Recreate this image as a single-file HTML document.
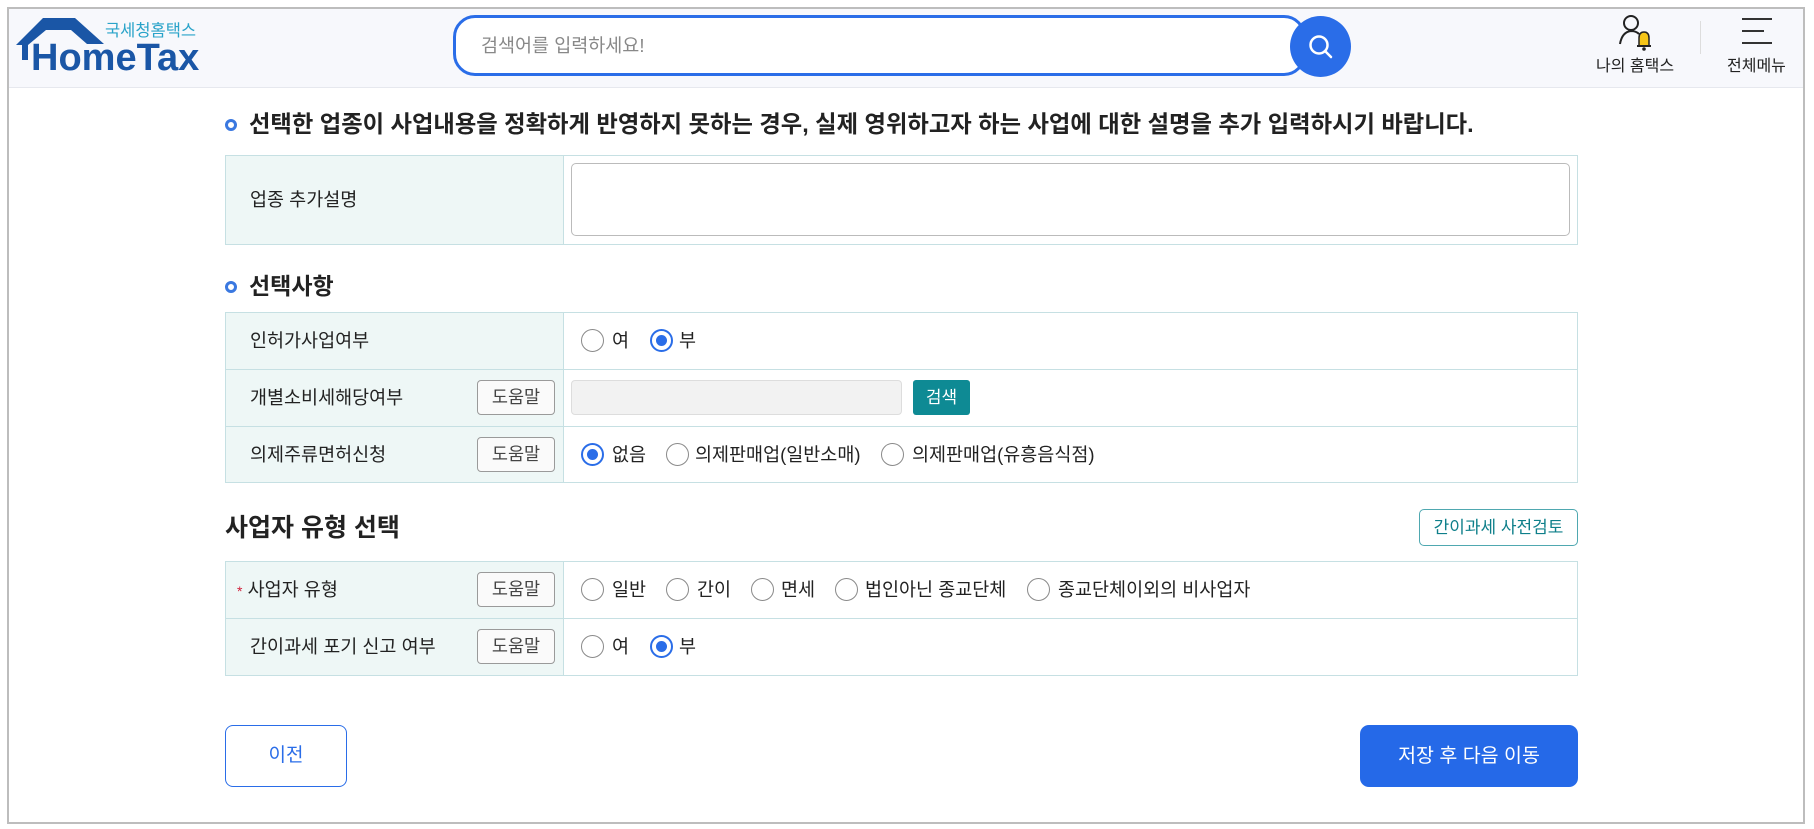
<!DOCTYPE html>
<html><head><meta charset="utf-8"><style>
*{margin:0;padding:0;box-sizing:border-box}
body{width:1814px;height:829px;background:#fff;font-family:"Liberation Sans","Noto Sans CJK KR",sans-serif;position:relative;overflow:hidden;color:#222}
.a{position:absolute}
.frame{left:7px;top:7px;width:1798px;height:817px;border:2px solid #bdbdbd}
.hdr{left:9px;top:9px;width:1794px;height:79px;background:#f7f8fc;border-bottom:1px solid #e6e8ee}
.t{font-size:18.5px;white-space:nowrap;line-height:22px}
.tbl{border:1px solid #c6e0e3;background:#fff}
.lab{background:#eef7f6;border-right:1px solid #c6e0e3}
.hl{height:1px;background:#c6e0e3}
.help{width:78px;height:35px;border:1px solid #9a9a9a;border-radius:4px;background:#fafafa;font-size:17.5px;color:#444;text-align:center;line-height:33px}
.r{width:23px;height:23px;border:1px solid #8a8a8a;border-radius:50%;background:#fff}
.r.on{border:2px solid #2a6de8}
.r.on::after{content:"";position:absolute;left:4px;top:4px;width:11px;height:11px;border-radius:50%;background:#2a6de8}
.bul{width:12px;height:12px;border:3px solid #3a78e0;border-radius:50%}
</style></head><body>
<div class="a frame"></div>
<div class="a hdr"></div>
<svg class="a" style="left:14px;top:16px" width="92" height="45" viewBox="0 0 92 45"><path d="M2 29 L29 2 L61 2 L90 28 L73 28 L57 14 L32 14 L14 29 Z M8 29 L14 29 L14 44 L8 44 Z" fill="#1a56a6"/></svg>
<div class="a" style="left:31px;top:38px;font-size:38px;font-weight:bold;color:#1a56a6;line-height:40px">HomeTax</div>
<div class="a" style="left:105px;top:22px;font-size:16.5px;color:#29a3c9;line-height:18px">국세청홈택스</div>
<div class="a" style="left:453px;top:15px;width:853px;height:61px;border:3px solid #2a6de8;border-radius:22px;background:#fff"></div>
<div class="a t" style="left:481px;top:35px;color:#888;font-size:18.5px">검색어를 입력하세요!</div>
<div class="a" style="left:1290px;top:16px;width:61px;height:61px;border-radius:50%;background:#2a6de8"></div>
<svg class="a" style="left:1306px;top:32px" width="30" height="30" viewBox="0 0 30 30"><circle cx="13" cy="13" r="8.5" fill="none" stroke="#fff" stroke-width="2.5"/><path d="M19 19 L25 25" stroke="#fff" stroke-width="2.5" stroke-linecap="round"/></svg>
<svg class="a" style="left:1617px;top:14px" width="40" height="38" viewBox="0 0 40 38"><circle cx="14" cy="9" r="7" fill="none" stroke="#222" stroke-width="2"/><path d="M3 30 Q5 18 14 17 Q19 17 22 20" fill="none" stroke="#222" stroke-width="2"/><path d="M22 32 L22 24 Q22 18 27 18 Q32 18 32 24 L32 32 Z" fill="#f5c518" stroke="#222" stroke-width="1.5"/><path d="M20 32 L34 32" stroke="#222" stroke-width="2"/><circle cx="27" cy="35" r="1.8" fill="#222"/></svg>
<div class="a t" style="left:1596px;top:56px;font-size:16px">나의 홈택스</div>
<div class="a" style="left:1700px;top:21px;width:1px;height:33px;background:#ddd"></div>
<div class="a" style="left:1742px;top:18px;width:30px;height:2px;background:#333"></div>
<div class="a" style="left:1742px;top:30px;width:22px;height:2px;background:#333"></div>
<div class="a" style="left:1742px;top:42px;width:30px;height:2px;background:#333"></div>
<div class="a t" style="left:1727px;top:56px;font-size:16px">전체메뉴</div>

<div class="a bul" style="left:225px;top:119px"></div>
<div class="a" style="left:249px;top:110px;font-size:23.3px;font-weight:bold;white-space:nowrap;line-height:28px">선택한 업종이 사업내용을 정확하게 반영하지 못하는 경우, 실제 영위하고자 하는 사업에 대한 설명을 추가 입력하시기 바랍니다.</div>
<div class="a tbl" style="left:225px;top:155px;width:1353px;height:90px"></div>
<div class="a lab" style="left:226px;top:156px;width:338px;height:88px"></div>
<div class="a t" style="left:250px;top:189px">업종 추가설명</div>
<div class="a" style="left:571px;top:163px;width:999px;height:73px;border:1px solid #bbb;border-radius:5px"></div>

<div class="a bul" style="left:225px;top:281px"></div>
<div class="a" style="left:249px;top:272px;font-size:23px;font-weight:bold;line-height:28px">선택사항</div>
<div class="a tbl" style="left:225px;top:312px;width:1353px;height:171px"></div>
<div class="a lab" style="left:226px;top:313px;width:338px;height:169px"></div>
<div class="a hl" style="left:226px;top:369px;width:1351px"></div>
<div class="a hl" style="left:226px;top:426px;width:1351px"></div>
<div class="a t" style="left:250px;top:330px">인허가사업여부</div>
<div class="a r" style="left:581px;top:329px"></div><div class="a t" style="left:612px;top:330px">여</div>
<div class="a r on" style="left:650px;top:329px"></div><div class="a t" style="left:679px;top:330px">부</div>
<div class="a t" style="left:250px;top:387px">개별소비세해당여부</div>
<div class="a help" style="left:477px;top:380px">도움말</div>
<div class="a" style="left:571px;top:380px;width:331px;height:35px;background:#f2f2f2;border:1px solid #ddd;border-radius:4px"></div>
<div class="a" style="left:913px;top:380px;width:57px;height:35px;background:#0e8a94;border-radius:3px;color:#fff;font-size:17px;text-align:center;line-height:35px">검색</div>
<div class="a t" style="left:250px;top:444px">의제주류면허신청</div>
<div class="a help" style="left:477px;top:437px">도움말</div>
<div class="a r on" style="left:581px;top:443px"></div><div class="a t" style="left:612px;top:444px">없음</div>
<div class="a r" style="left:666px;top:443px"></div><div class="a t" style="left:695px;top:444px">의제판매업(일반소매)</div>
<div class="a r" style="left:881px;top:443px"></div><div class="a t" style="left:912px;top:444px">의제판매업(유흥음식점)</div>

<div class="a" style="left:225px;top:513px;font-size:25px;font-weight:bold;line-height:30px">사업자 유형 선택</div>
<div class="a" style="left:1419px;top:509px;width:159px;height:37px;border:1px solid #4fa8b0;border-radius:5px;color:#0e7f8a;font-size:17px;text-align:center;line-height:35px">간이과세 사전검토</div>
<div class="a tbl" style="left:225px;top:561px;width:1353px;height:115px"></div>
<div class="a lab" style="left:226px;top:562px;width:338px;height:113px"></div>
<div class="a hl" style="left:226px;top:618px;width:1351px"></div>
<div class="a t" style="left:237px;top:579px"><span style="color:#d0203a;font-size:14px">*</span> 사업자 유형</div>
<div class="a help" style="left:477px;top:572px">도움말</div>
<div class="a r" style="left:581px;top:578px"></div><div class="a t" style="left:612px;top:579px">일반</div>
<div class="a r" style="left:666px;top:578px"></div><div class="a t" style="left:697px;top:579px">간이</div>
<div class="a r" style="left:751px;top:578px"></div><div class="a t" style="left:781px;top:579px">면세</div>
<div class="a r" style="left:835px;top:578px"></div><div class="a t" style="left:865px;top:579px">법인아닌 종교단체</div>
<div class="a r" style="left:1027px;top:578px"></div><div class="a t" style="left:1058px;top:579px">종교단체이외의 비사업자</div>
<div class="a t" style="left:250px;top:636px">간이과세 포기 신고 여부</div>
<div class="a help" style="left:477px;top:629px">도움말</div>
<div class="a r" style="left:581px;top:635px"></div><div class="a t" style="left:612px;top:636px">여</div>
<div class="a r on" style="left:650px;top:635px"></div><div class="a t" style="left:679px;top:636px">부</div>

<div class="a" style="left:225px;top:725px;width:122px;height:62px;border:1px solid #2a6de8;border-radius:8px;color:#2a6de8;font-size:19px;text-align:center;line-height:60px">이전</div>
<div class="a" style="left:1360px;top:725px;width:218px;height:62px;background:#2569e8;border-radius:9px;color:#fff;font-size:19.5px;text-align:center;line-height:62px">저장 후 다음 이동</div>
</body></html>
